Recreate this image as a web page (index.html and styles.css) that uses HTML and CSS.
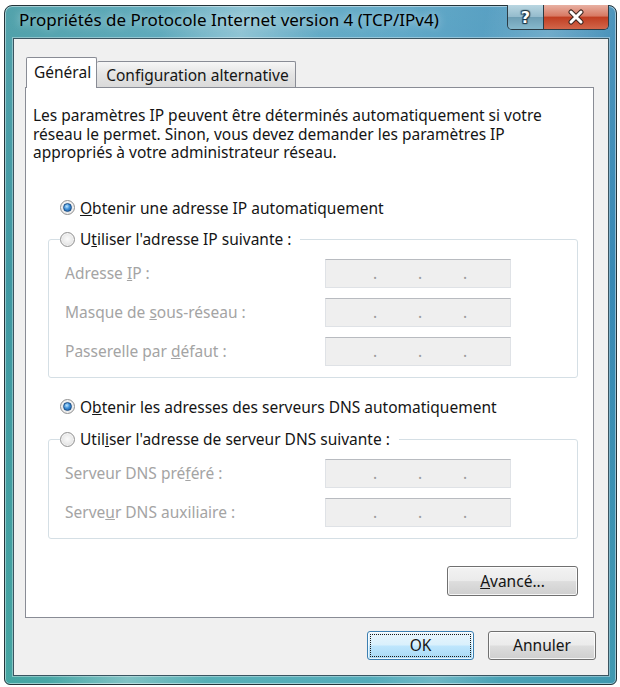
FILE: index.html
```html
<!DOCTYPE html>
<html>
<head>
<meta charset="UTF-8" />
<link rel="stylesheet" href="styles.css">
</head>
<body>

<div class="window">
  <div class="titlebar">
    <span class="title">Propriétés de Protocole Internet version 4 (TCP/IPv4)</span>
    <div class="caption">
      <div class="cbtn help"><span>?</span></div>
      <div class="cbtn close">
        <svg width="20" height="16" viewBox="0 0 20 16">
          <path d="M5 3 L15 13 M15 3 L5 13" stroke="#3a2620" stroke-width="5" stroke-linecap="round" fill="none" />
          <path d="M5 3 L15 13 M15 3 L5 13" stroke="#fff" stroke-width="3" stroke-linecap="round" fill="none" />
        </svg>
      </div>
    </div>
  </div>

  <div class="client">
    <div class="tabs">
      <div class="tab active">Général</div>
      <div class="tab">Configuration alternative</div>
    </div>

    <div class="panel">
      <p class="intro">
        Les paramètres IP peuvent être déterminés automatiquement si votre<br>
        réseau le permet. Sinon, vous devez demander les paramètres IP<br>
        appropriés à votre administrateur réseau.
      </p>

      <div class="option top">
        <span class="radio checked"><span class="dot"></span></span>
        <span><u>O</u>btenir une adresse IP automatiquement</span>
      </div>

      <fieldset class="group first">
        <legend class="option">
          <span class="radio"></span>
          <span>U<u>t</u>iliser l'adresse IP suivante :</span>
        </legend>
        <div class="fields">
          <span class="label">Adresse <u>I</u>P :</span>
          <span class="ipbox"><i>.</i><i>.</i><i>.</i></span>
          <span class="label">Masque de <u>s</u>ous-réseau :</span>
          <span class="ipbox"><i>.</i><i>.</i><i>.</i></span>
          <span class="label">Passerelle par <u>d</u>éfaut :</span>
          <span class="ipbox"><i>.</i><i>.</i><i>.</i></span>
        </div>
      </fieldset>

      <div class="option dns">
        <span class="radio checked"><span class="dot"></span></span>
        <span>O<u>b</u>tenir les adresses des serveurs DNS automatiquement</span>
      </div>

      <fieldset class="group second">
        <legend class="option">
          <span class="radio"></span>
          <span>Util<u>i</u>ser l'adresse de serveur DNS suivante :</span>
        </legend>
        <div class="fields">
          <span class="label">Serveur DNS pré<u>f</u>éré :</span>
          <span class="ipbox"><i>.</i><i>.</i><i>.</i></span>
          <span class="label">Serve<u>u</u>r DNS auxiliaire :</span>
          <span class="ipbox"><i>.</i><i>.</i><i>.</i></span>
        </div>
      </fieldset>

      <div class="advanced">
        <div class="btn wide"><u>A</u>vancé...</div>
      </div>
    </div>

    <div class="footer">
      <div class="btn ok"><span>OK</span></div>
      <div class="btn cancel">Annuler</div>
    </div>
  </div>
</div>

</body>
</html>
```

FILE: styles.css
```css
* {
  box-sizing: border-box;
}

body {
  margin: 5px 0 0 4px;
  background: #fff;
  font-family: "Noto Sans", "Open Sans", sans-serif;
  font-size: 15.5px;
  color: #151515;
}

/* aero glass frame */
div.window {
  width: 613px;
  padding: 0 7px 8px 8px;
  border: 1px solid #24343a;
  border-radius: 8px 8px 6px 6px;
  background:
    linear-gradient(100deg, rgba(255,255,255,0) 22%, rgba(255,255,255,0.28) 33%, rgba(255,255,255,0) 44%,
      rgba(255,255,255,0) 66%, rgba(255,255,255,0.18) 75%, rgba(255,255,255,0) 84%),
    linear-gradient(to bottom, rgba(255,255,255,0.1), rgba(255,255,255,0) 40%, rgba(90,210,160,0.22) 100%),
    linear-gradient(to right, #3f98a2, #56a6bd 35%, #51a0c2 65%, #3888b4 100%);
  box-shadow: inset 0 0 0 1px rgba(255,255,255,0.45);
}

div.titlebar {
  display: flex;
  justify-content: space-between;
  height: 32px;
}

div.titlebar span.title {
  margin: 4px 0 0 6px;
  font-size: 17px;
  line-height: 20px;
  color: #000;
  white-space: nowrap;
  text-shadow: 0 0 8px rgba(255,255,255,0.7);
}

div.caption {
  display: flex;
  margin-top: -1px;
  height: 25px;
  border: 1px solid #2b3b44;
  border-top: none;
  border-radius: 0 0 5px 5px;
  overflow: hidden;
}

div.cbtn {
  display: flex;
  align-items: center;
  justify-content: center;
  height: 100%;
}

div.cbtn.help {
  width: 36px;
  border-right: 1px solid #2b3b44;
  background: linear-gradient(to bottom, #b9d6e1 0%, #95bccd 48%, #6f9fb5 52%, #86b8cc 100%);
}

div.cbtn.help span {
  font-family: "DejaVu Sans", sans-serif;
  font-weight: bold;
  font-size: 16px;
  color: #fff;
  text-shadow: 0 0 1px #1d3646, 1px 1px 1px #1d3646, -1px -1px 1px #1d3646, 1px -1px 1px #1d3646, -1px 1px 1px #1d3646;
}

div.cbtn.close {
  width: 64px;
  background: linear-gradient(to bottom, #e8b0a2 0%, #d87a64 45%, #c13f23 52%, #d2664a 100%);
}

/* client area */
div.client {
  padding: 18px 12px 15px 11px;
  border: 1px solid #3a5561;
  background: #f0f0f0;
  box-shadow: 0 0 0 1px rgba(255,255,255,0.35);
}

div.tabs {
  display: flex;
  align-items: flex-end;
  height: 30px;
  margin-left: 1px;
}

div.tab {
  display: flex;
  align-items: center;
  height: 26px;
  padding: 0 6px 0 9px;
  border: 1px solid #898c95;
  border-left: none;
  border-bottom: none;
  border-radius: 2px 2px 0 0;
  background: linear-gradient(to bottom, #f6f6f6, #e4e4e4 50%, #dadada);
  line-height: 18px;
}

div.tab.active {
  position: relative;
  z-index: 1;
  height: 31px;
  margin-bottom: -1px;
  padding: 0 5px 2px 7px;
  border-left: 1px solid #898c95;
  background: #fff;
}

div.panel {
  margin-right: 2px;
  padding: 18px 15px 21px 7px;
  border: 1px solid #898c95;
  background: #fff;
}

p.intro {
  margin: 0;
  line-height: 18.5px;
  white-space: nowrap;
}

.option {
  display: flex;
  align-items: center;
  height: 18.5px;
  line-height: 18.5px;
  white-space: nowrap;
}

div.option.top {
  margin: 37px 0 0 27px;
}

div.option.dns {
  margin: 20px 0 0 27px;
}

span.radio {
  display: flex;
  align-items: center;
  justify-content: center;
  width: 15px;
  height: 15px;
  margin-right: 5px;
  border: 1px solid #929292;
  border-radius: 50%;
  background: radial-gradient(circle at 50% 45%, #fbfbfb 0%, #ececec 45%, #d2d2d2 100%);
  box-shadow: inset 0 0 0 1px rgba(255,255,255,0.6);
}

span.radio span.dot {
  width: 9px;
  height: 9px;
  border: 1px solid #1c4f86;
  border-radius: 50%;
  background: radial-gradient(circle at 40% 35%, #bfe6ff 0%, #3f90d8 45%, #124f98 100%);
}

fieldset.group {
  min-width: 0;
  margin: 13px 0 0 15px;
  padding: 10px 0 11px 11px;
  border: 1px solid #d5dfe5;
  border-radius: 3px;
}

fieldset.group.second {
  margin-top: 14px;
}

fieldset.group legend {
  padding: 0 9px 0 0;
}

div.fields {
  display: grid;
  grid-template-columns: 260px 186px;
  row-gap: 10px;
  margin-left: 5px;
}

span.label {
  align-self: center;
  color: #a4a4a4;
  white-space: nowrap;
}

span.ipbox {
  display: flex;
  height: 29px;
  padding-left: 47px;
  gap: 41px;
  border: 1px solid #dfe2e6;
  border-top-color: #b8bbc0;
  background: #efefef;
  line-height: 27px;
}

span.ipbox i {
  width: 4px;
  font-style: normal;
  text-align: center;
  color: #9b9b9b;
}

div.advanced {
  display: flex;
  justify-content: flex-end;
  margin-top: 27px;
}

/* push buttons */
div.btn {
  display: flex;
  align-items: center;
  justify-content: center;
  height: 29px;
  border: 1px solid #707070;
  border-radius: 3px;
  background: linear-gradient(to bottom, #f3f3f3 0%, #ebebeb 48%, #dddddd 52%, #cfcfcf 100%);
  box-shadow: inset 0 0 0 1px rgba(255,255,255,0.8);
  white-space: nowrap;
}

div.btn.wide {
  width: 131px;
  height: 30px;
}

div.footer {
  display: flex;
  justify-content: flex-end;
  gap: 14px;
  margin-top: 13px;
}

div.btn.ok {
  width: 107px;
  padding: 2px;
  border-color: #3c7fb1;
  background: linear-gradient(to bottom, #eaf6fd 0%, #d9f0fc 48%, #bee6fd 52%, #a7d9f5 100%);
  box-shadow: inset 0 0 0 1px rgba(255,255,255,0.7);
}

div.btn.ok span {
  display: flex;
  align-items: center;
  justify-content: center;
  width: 100%;
  height: 100%;
  border: 1px dotted #1a1a1a;
}

div.btn.cancel {
  width: 108px;
}
```
